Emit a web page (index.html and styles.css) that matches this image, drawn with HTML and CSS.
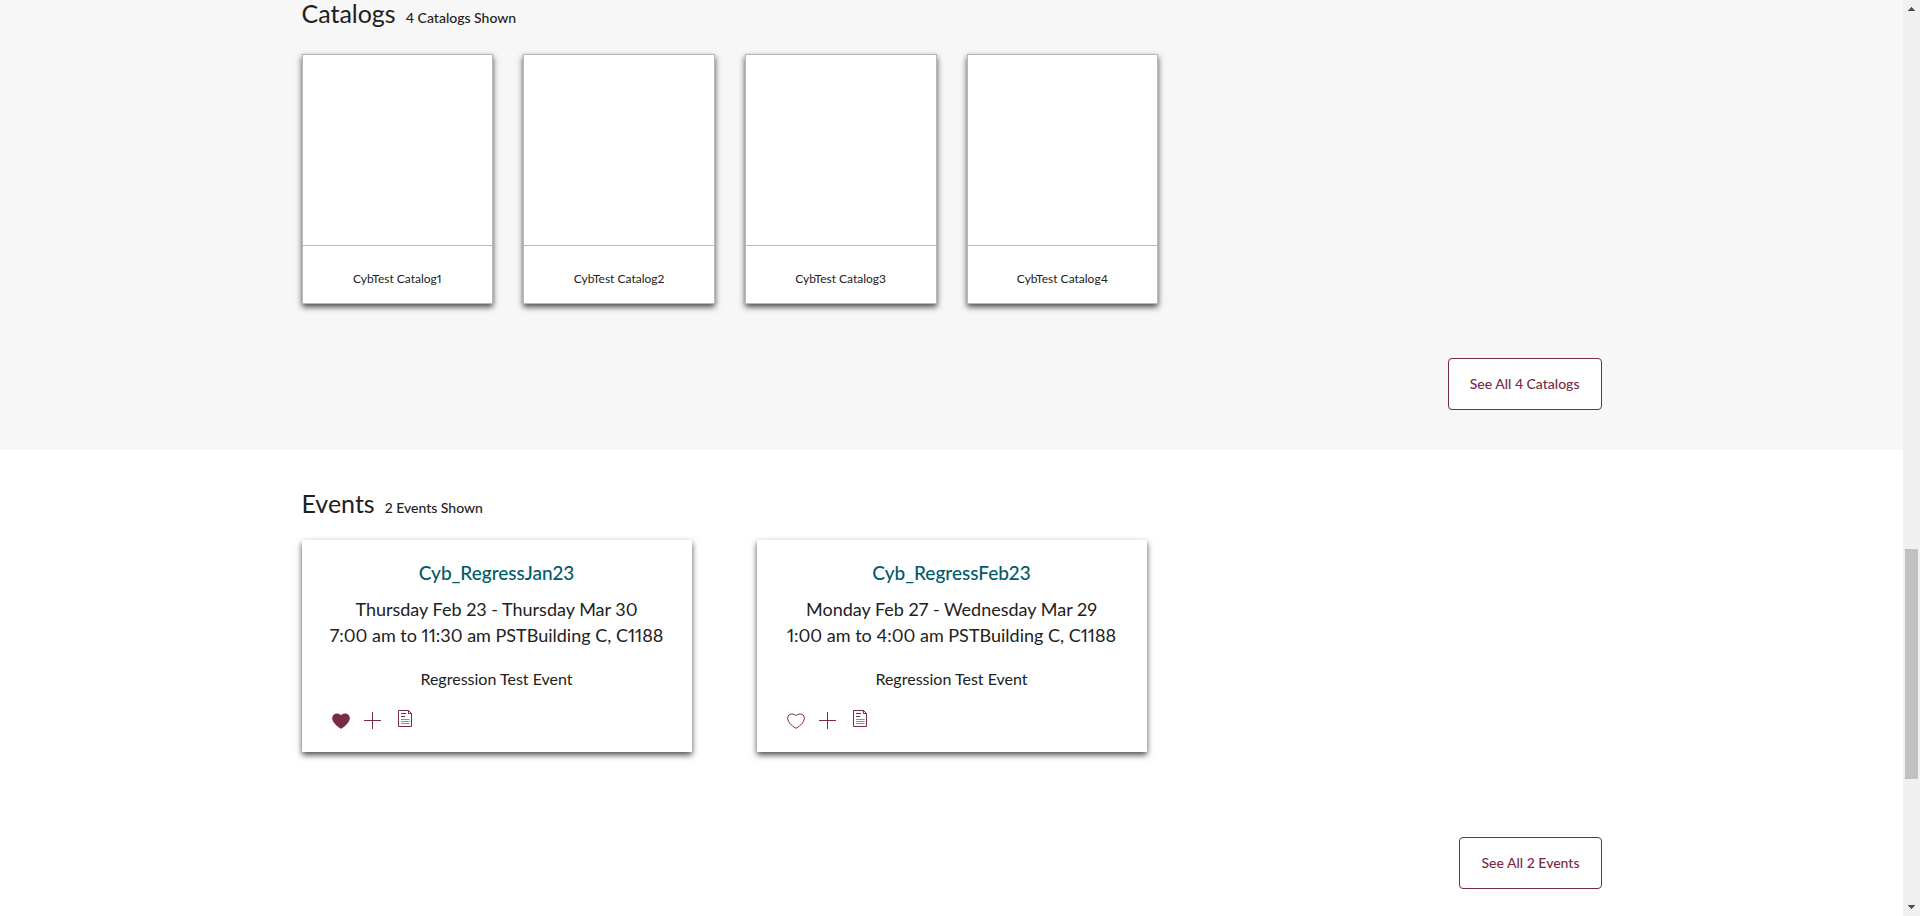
FILE: index.html
```html
<!DOCTYPE html>
<html lang="en">
<head>
<meta charset="utf-8">
<title>Catalogs and Events</title>
<link rel="stylesheet" href="styles.css">
</head>
<body>
<svg class="sprite" aria-hidden="true">
  <symbol id="heart" viewBox="0 0 18 16"><path d="M9 15.300C7 14.300 .7 10 .7 5.200C.7 2.500 2.400 1 4.800 1C6.700 1 8 1.700 9 2.700C10 1.700 11.300 1 13.200 1C15.600 1 17.300 2.500 17.300 5.200C17.300 10 11 14.300 9 15.300Z"/></symbol>
  <symbol id="plus" viewBox="0 0 18 18"><path d="M8.500 0V17M0 8.500H17"/></symbol>
  <symbol id="doc" viewBox="0 0 14 18"><path d="M.5.500H10.500L13.500 3.500V16.500H.5ZM10.500.5V3.500H13.500"/><path d="M3 3.500H8M3 6.500H7"/><path class="faint" d="M3 9.500H11.500M3 11.500H11.500M3 13.500H11.500"/></symbol>
</svg>
<div class="page">
  <main class="content">
    <section class="band band-catalogs">
      <div class="inner">
        <header class="heading"><h2>Catalogs</h2><span class="count">4 Catalogs Shown</span></header>
        <div class="catalogs">
          <a class="catalog" href="#"><span class="cover"></span><span class="name">CybTest Catalog1</span></a>
          <a class="catalog" href="#"><span class="cover"></span><span class="name">CybTest Catalog2</span></a>
          <a class="catalog" href="#"><span class="cover"></span><span class="name">CybTest Catalog3</span></a>
          <a class="catalog" href="#"><span class="cover"></span><span class="name">CybTest Catalog4</span></a>
        </div>
        <div class="more more-catalogs"><button class="see-all" type="button">See All 4 Catalogs</button></div>
      </div>
    </section>
    <section class="band band-events">
      <div class="inner">
        <header class="heading"><h2>Events</h2><span class="count">2 Events Shown</span></header>
        <div class="events">
          <article class="event">
            <h3><a href="#">Cyb_RegressJan23</a></h3>
            <p class="when">Thursday Feb 23 - Thursday Mar 30<br>7:00 am to 11:30 am PSTBuilding C, C1188</p>
            <p class="about">Regression Test Event</p>
            <div class="actions">
              <button type="button" aria-label="Remove favorite"><svg class="heart filled"><use href="#heart"/></svg></button>
              <button type="button" aria-label="Add"><svg class="plus"><use href="#plus"/></svg></button>
              <button class="notes" type="button" aria-label="Notes"><svg class="doc"><use href="#doc"/></svg></button>
            </div>
          </article>
          <article class="event">
            <h3><a href="#">Cyb_RegressFeb23</a></h3>
            <p class="when">Monday Feb 27 - Wednesday Mar 29<br>1:00 am to 4:00 am PSTBuilding C, C1188</p>
            <p class="about">Regression Test Event</p>
            <div class="actions">
              <button type="button" aria-label="Add favorite"><svg class="heart"><use href="#heart"/></svg></button>
              <button type="button" aria-label="Add"><svg class="plus"><use href="#plus"/></svg></button>
              <button class="notes" type="button" aria-label="Notes"><svg class="doc"><use href="#doc"/></svg></button>
            </div>
          </article>
        </div>
        <div class="more more-events"><button class="see-all" type="button">See All 2 Events</button></div>
      </div>
    </section>
  </main>
  <div class="scrollbar" aria-hidden="true">
    <svg class="arrow" viewBox="0 0 17 17" shape-rendering="crispEdges"><path d="M8 7h1v1h1v1h1v1h1v1H5v-1h1V9h1V8h1z"/></svg>
    <span class="before"></span>
    <span class="thumb"></span>
    <span class="after"></span>
    <svg class="arrow" viewBox="0 0 17 17" shape-rendering="crispEdges"><path d="M5 6h7v1h-1v1h-1v1H9v1H8V9H7V8H6V7H5z"/></svg>
  </div>
</div>
</body>
</html>
```
FILE: styles.css
```css
* { box-sizing: border-box; }

body {
  margin: 0;
  background: #fff;
  color: #212121;
  font-family: Lato, "Open Sans", sans-serif;
  font-variant-numeric: proportional-nums;
}

h2, h3, p { margin: 0; font-weight: 400; }
a { color: inherit; text-decoration: none; }
.sprite { display: none; }

.page { display: flex; min-height: 100vh; }
.content { flex: 1; min-width: 0; }

.band-catalogs { background: #f7f7f7; padding-bottom: 40px; }
.band-events { padding: 40px 0 24px; }
.inner { width: 100%; max-width: 1300px; margin: 0 auto; }

.heading { display: flex; align-items: baseline; gap: 10px; }
.heading h2 { font-size: 25px; line-height: 26px; }
.count { font-size: 14px; line-height: 16px; font-weight: 500; }

.catalogs {
  display: grid;
  grid-template-columns: repeat(6, 1fr);
  gap: 30px;
  margin-top: 28px;
}
.catalog {
  display: flex;
  flex-direction: column;
  background: #fff;
  border: 1px solid #b9b9b9;
  box-shadow: 0 3px 6px rgba(0, 0, 0, .7);
}
.cover { box-sizing: content-box; aspect-ratio: 1; border-bottom: 1px solid #b9b9b9; }
.name { padding: 23px 10px 14px; font-size: 12px; line-height: 20px; text-align: center; }

.more { display: flex; justify-content: flex-end; }
.more-catalogs { margin-top: 54px; }
.more-events { margin-top: 85px; }
.see-all {
  padding: 15px 21px;
  border: 1px solid #772b48;
  border-radius: 4px;
  background: #fff;
  color: #772b48;
  font: 500 14px/20px Lato, "Open Sans", sans-serif;
}

.events { display: flex; gap: 5%; margin-top: 24px; }
.event {
  width: 30%;
  padding: 20px 30px;
  background: #fff;
  box-shadow: 0 3px 6px rgba(0, 0, 0, .7);
  text-align: center;
}
.event h3 { color: #005b69; font-size: 19px; line-height: 26px; font-weight: 500; }
.when { margin: 10px -20px 20px; font-size: 18px; line-height: 26px; }
.about { font-size: 16px; line-height: 22px; }

.actions { display: flex; align-items: center; gap: 14px; height: 26px; margin: 18px 0 -2px; }
.actions button { display: flex; justify-content: center; width: 18px; padding: 0; border: 0; background: none; }
.actions .notes { align-self: flex-start; padding-top: 2px; }
.actions svg { fill: none; stroke: #772b48; stroke-width: 1; }
.heart { width: 18px; height: 16px; }
.actions .filled { fill: #772b48; }
.plus { width: 18px; height: 18px; }
.doc { width: 14px; height: 18px; }
.faint { opacity: .6; }

.scrollbar { display: flex; flex-direction: column; width: 17px; background: #f0f0f0; }
.arrow { width: 17px; height: 17px; fill: #505050; }
.before { flex: 532; }
.thumb { flex: 230; margin: 0 2px; background: #c1c1c1; }
.after { flex: 120; }
```
